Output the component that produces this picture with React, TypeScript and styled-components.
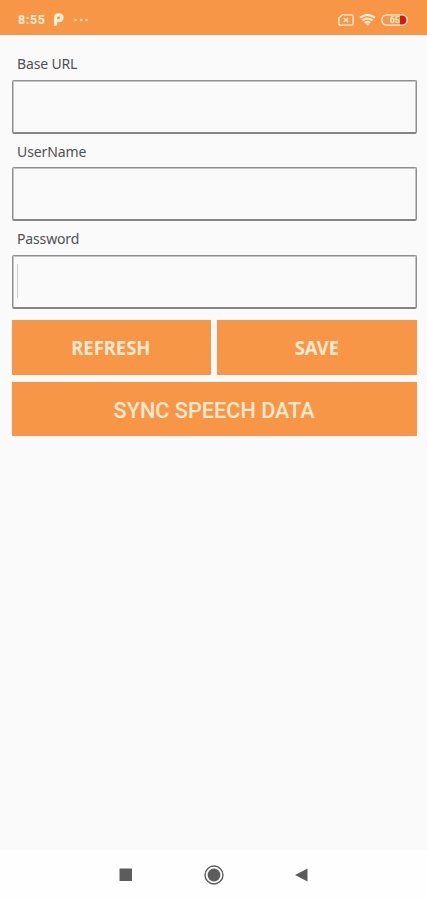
import React from "react";
import styled, { createGlobalStyle } from "styled-components";

const Global = createGlobalStyle`
  * { box-sizing: border-box; }
  body { margin: 0; background: #fafafa; }
`;

const Screen = styled.div`
  width: 427px;
  height: 900px;
  display: flex;
  flex-direction: column;
  background: #fafafa;
  font-family: "Noto Sans", sans-serif;
  overflow: hidden;
`;

const StatusBar = styled.header`
  height: 35px;
  flex: none;
  display: flex;
  align-items: center;
  justify-content: space-between;
  padding: 4px 19px 0 18px;
  background: #f79646;
  color: #fff0dc;
`;

const StatusGroup = styled.div<{ $gap: number }>`
  display: flex;
  align-items: center;
  gap: ${(p) => p.$gap}px;
  svg { display: block; }
`;

const Clock = styled.span`
  width: 28px;
  margin-right: -3px;
  font: 700 12.5px/14px Roboto, sans-serif;
  letter-spacing: 0.6px;
`;

const Form = styled.main`
  flex: 1;
  padding: 14px 10.5px 0 11.5px;
`;

const Field = styled.label`
  display: block;
  height: 87.7px;
`;

const Caption = styled.span<{ $spacing: number }>`
  display: block;
  height: 30.5px;
  padding-left: 5.5px;
  font-size: 14px;
  line-height: 29px;
  letter-spacing: ${(p) => p.$spacing}px;
  color: #505050;
`;

const Input = styled.span`
  display: flex;
  align-items: center;
  height: 54px;
  padding-left: 4px;
  border: 1px solid #8f8f8f;
  border-bottom: 2px solid #858585;
  border-radius: 2px;
  box-shadow: inset 1px 0 #c4c4c4, inset -1px 0 #c4c4c4, inset 0 1px #c4c4c4;
`;

const Caret = styled.i`
  width: 1px;
  height: 34px;
  background: #cacaca;
`;

const Actions = styled.div`
  display: grid;
  grid-template-columns: 1fr 1fr;
  column-gap: 6px;
  row-gap: 7px;
  padding-top: 8px;
`;

const Button = styled.button<{ $wide?: boolean }>`
  grid-column: ${(p) => (p.$wide ? "1 / -1" : "auto")};
  height: 54.5px;
  padding: ${(p) => (p.$wide ? 4 : 2)}px 0 0;
  border: 0;
  background: #f79646;
  color: #ffe9cf;
  font-family: ${(p) => (p.$wide ? "Roboto" : '"Noto Sans"')}, sans-serif;
  font-size: ${(p) => (p.$wide ? 22 : 19)}px;
  font-weight: ${(p) => (p.$wide ? 500 : 700)};
  line-height: 28px;
`;

const ButtonText = styled.span<{ $stretch: number }>`
  display: inline-block;
  transform: scaleX(${(p) => p.$stretch});
`;

const NavBar = styled.nav`
  height: 50px;
  flex: none;
  background: #fefefe;
  display: grid;
  grid-template-columns: 14px 20px 14px;
  column-gap: 71px;
  justify-content: start;
  align-items: center;
  padding-left: 119px;
  svg { display: block; }
`;

export default function App() {
  return (
    <Screen>
      <Global />
      <StatusBar>
        <StatusGroup $gap={9.5}>
          <Clock>8:55</Clock>
          <svg width="11" height="13" viewBox="0 0 10 12" fill="none">
            <path d="M2.3 10.5V4.2Q2.3 1.7 5.2 1.7Q8.2 1.7 8.2 4.4Q8.2 7.1 4.7 7.1" stroke="currentColor" strokeWidth="3" strokeLinecap="round" />
          </svg>
          <svg width="16" height="4" viewBox="0 0 16 4" fill="currentColor">
            <circle cx="2.4" cy="2" r="1.2" />
            <circle cx="8" cy="2" r="1.2" />
            <circle cx="13.6" cy="2" r="1.2" />
          </svg>
        </StatusGroup>
        <StatusGroup $gap={5}>
          <svg width="16" height="12" viewBox="0 0 16 12" fill="none" stroke="currentColor">
            <path d="M4.2.8H13.5Q15.2.8 15.2 2.5V9.5Q15.2 11.2 13.5 11.2H2.5Q.8 11.2.8 9.5V4.2Z" strokeWidth="1.3" />
            <path d="M5.8 4L10.2 8M10.2 4L5.8 8" strokeWidth="1.2" />
          </svg>
          <svg width="17" height="12" viewBox="0 0 17 12" fill="none" stroke="currentColor" strokeWidth="2">
            <path d="M1 3.8Q8.5-2 16 3.8M3.4 6.4Q8.5 2.5 13.6 6.4M5.8 8.8Q8.5 6.9 11.2 8.8" />
            <path d="M6.7 9.6H10.3L8.5 11.8Z" fill="currentColor" stroke="none" />
          </svg>
          <svg width="27" height="12" viewBox="0 0 27 12">
            <path d="M19 1H21Q26 1 26 6T21 11H19Z" fill="#d71910" />
            <rect x=".8" y=".8" width="25.4" height="10.4" rx="5.2" fill="none" stroke="currentColor" strokeWidth="1.3" />
            <text x="13.8" y="9.2" textAnchor="middle" fontFamily="Roboto, sans-serif" fontSize="9" fontWeight="700" fill="currentColor">65</text>
          </svg>
        </StatusGroup>
      </StatusBar>
      <Form>
        <Field><Caption $spacing={-0.15}>Base URL</Caption><Input /></Field>
        <Field><Caption $spacing={-0.1}>UserName</Caption><Input /></Field>
        <Field><Caption $spacing={-0.15}>Password</Caption><Input><Caret /></Input></Field>
        <Actions>
          <Button><ButtonText $stretch={0.97}>REFRESH</ButtonText></Button>
          <Button><ButtonText $stretch={0.97}>SAVE</ButtonText></Button>
          <Button $wide><ButtonText $stretch={0.985}>SYNC SPEECH DATA</ButtonText></Button>
        </Actions>
      </Form>
      <NavBar>
        <svg width="14" height="14" viewBox="0 0 14 14"><rect x=".5" y=".5" width="12.5" height="12.5" fill="#5c5c5c" /></svg>
        <svg width="20" height="20" viewBox="0 0 20 20">
          <circle cx="10" cy="10" r="9" fill="none" stroke="#5c5c5c" strokeWidth="1.4" />
          <circle cx="10" cy="10" r="6.4" fill="#5c5c5c" />
        </svg>
        <svg width="14" height="14" viewBox="0 0 14 14"><path d="M12.5.5V13.5L0 7Z" fill="#5c5c5c" /></svg>
      </NavBar>
    </Screen>
  );
}
